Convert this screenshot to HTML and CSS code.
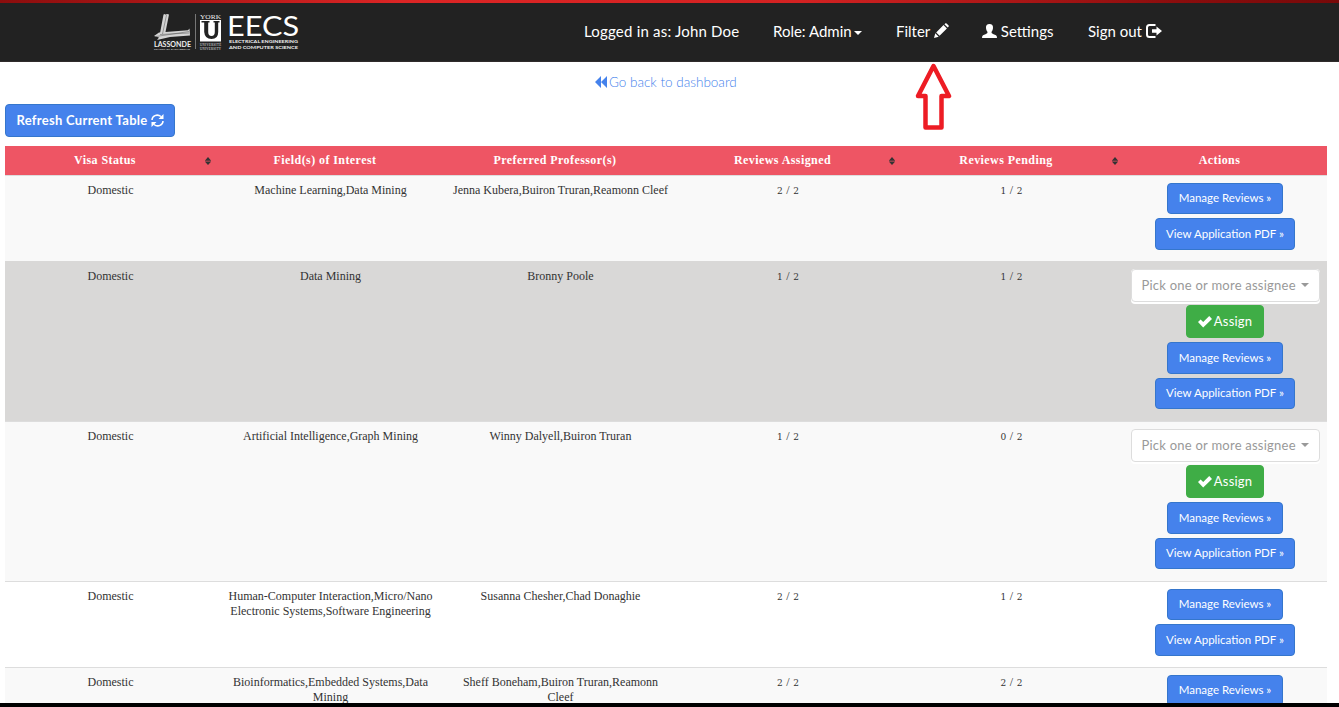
FILE: index.html
```html
<!DOCTYPE html>
<html lang="en">
<head>
<meta charset="utf-8">
<title>Applications</title>
<link rel="stylesheet" href="styles.css">
</head>
<body>
<svg width="0" height="0" class="sprites" aria-hidden="true">
  <symbol id="sort" viewBox="0 0 6 8"><path d="M3 0 6 3.400V3.800H0V3.400ZM0 4.400h6v.4L3 8 0 4.800Z"/></symbol>
  <symbol id="check" viewBox="0 0 14 12"><path d="M0 6.100 2.600 3.500 5.200 6.100 11.200.1 14 2.900 5.200 11.500Z"/></symbol>
</svg>
<header class="navbar">
  <svg class="logo" width="150" height="44" viewBox="0 0 150 44">
    <g fill="#d4d4d4">
      <path d="M9.500 2.500 11 2l.5.800L13 2l2 .5L10.500 25 5.500 24Z"/>
      <path d="M0 24 5 20.500l29-2.300 1.500-1.700.5 7L16 25 3 28 5 25.500Z"/>
    </g>
    <path d="M12.500 3 8.500 22M2 24.500l33-5M6 22.500l29-1.500" fill="none" stroke="#555" stroke-width=".5"/>
    <text class="logo-bold" x="0" y="34.500" font-size="7" textLength="37" lengthAdjust="spacingAndGlyphs">LASSONDE</text>
    <text class="logo-sans" x="0" y="37.800" font-size="2.600" textLength="36">SCHOOL OF ENGINEERING</text>
    <path d="M41.500 2v35" stroke="#777"/>
    <text class="logo-serif" x="46" y="6.500" font-size="6.800" textLength="21" lengthAdjust="spacingAndGlyphs">YORK</text>
    <path fill="#fff" d="M46 8h21v21.500H46Z"/>
    <path fill="#222" d="M47.500 9h8v1.500h-1.300V20q0 4 3.300 4t3.300-4V10.500H59.500V9h6v1.500h-1.300V20q0 7-6.700 7t-7.300-7V10.500H47.500Z"/>
    <text class="logo-serif" x="46" y="33.800" font-size="3" textLength="21">UNIVERSITÉ</text>
    <text class="logo-serif" x="46" y="37.500" font-size="3" textLength="21">UNIVERSITY</text>
    <text class="logo-main" x="73" y="24" font-size="27" textLength="72" lengthAdjust="spacingAndGlyphs">EECS</text>
    <text class="logo-bold" x="75" y="30.500" font-size="4.400" textLength="69" lengthAdjust="spacingAndGlyphs">ELECTRICAL ENGINEERING</text>
    <text class="logo-bold" x="75" y="36.500" font-size="4.400" textLength="69" lengthAdjust="spacingAndGlyphs">AND COMPUTER SCIENCE</text>
  </svg>
  <nav class="nav">
    <span class="n-user">Logged in as: John Doe</span>
    <span class="n-role">Role: Admin<i class="caret"></i></span>
    <span class="n-filter">Filter <svg width="15" height="15" viewBox="0 0 15 15"><path fill="#fff" d="M0 15 1.300 10.300 4.700 13.700ZM2.200 9.400 9.500 2.100 12.900 5.500 5.600 12.800ZM10.400 1.300 11.500.3Q12 0 12.600.5L14.600 2.500Q15 3 14.700 3.600L13.700 4.600Z"/></svg></span>
    <span class="n-settings"><svg width="15" height="14" viewBox="0 0 15 14"><path fill="#fff" d="M7.500 0C10 0 11.200 1.600 11 4 10.900 6 10 7 9.500 8c0 1 .5 1.500 1.500 2l3 1.200q1 .5 1 2.800H0q0-2.300 1-2.800L4 10c1-.5 1.500-1 1.500-2C5 7 4.100 6 4 4 3.800 1.600 5 0 7.500 0Z"/></svg> Settings</span>
    <span class="n-out">Sign out <svg width="16" height="14" viewBox="0 0 16 14"><path fill="none" stroke="#fff" stroke-width="2" d="M9.500 1H3.500Q1 1 1 3.500v7Q1 13 3.500 13h6"/><path fill="#fff" d="M6 5.300h4.500V2.500L16 7l-5.500 4.500V8.700H6Z"/></svg></span>
  </nav>
</header>
<main>
  <a class="back"><svg width="12" height="12" viewBox="0 0 12 12"><path fill="#4582ec" d="M0 6 6 0V12ZM6 6l6-6V12Z"/></svg><span>Go back to dashboard</span></a>
  <button class="btn refresh"><span>Refresh Current Table</span><svg width="13" height="13" viewBox="0 0 13 13"><path fill="none" stroke="#fff" stroke-width="1.500" d="M1 6C1 2 6-.5 10 2.500M12 7c0 4-5 6.500-9 3.500"/><path fill="#fff" d="M12.500 0v5h-5ZM.5 13V8h5Z"/></svg></button>
  <div class="table">
    <div class="row head">
      <div><b>Visa Status</b><svg class="sort"><use href="#sort"/></svg></div>
      <div><b>Field(s) of Interest</b></div>
      <div><b>Preferred Professor(s)</b></div>
      <div><b>Reviews Assigned</b><svg class="sort"><use href="#sort"/></svg></div>
      <div><b>Reviews Pending</b><svg class="sort"><use href="#sort"/></svg></div>
      <div><b>Actions</b></div>
    </div>
    <div class="row odd">
      <div>Domestic</div><div>Machine Learning,Data Mining</div><div>Jenna Kubera,Buiron Truran,Reamonn Cleef</div>
      <div class="num"><i>2</i> / <i>2</i></div><div class="num"><i>1</i> / <i>2</i></div>
      <div class="actions"><button class="btn manage">Manage Reviews »</button><button class="btn view">View Application PDF »</button></div>
    </div>
    <div class="row tall hover">
      <div>Domestic</div><div>Data Mining</div><div>Bronny Poole</div>
      <div class="num"><i>1</i> / <i>2</i></div><div class="num"><i>1</i> / <i>2</i></div>
      <div class="actions"><div class="picker"><div class="select"><span>Pick one or more assignee</span><i class="caret"></i></div></div><button class="btn assign"><svg width="14" height="12"><use href="#check"/></svg><span>Assign</span></button><button class="btn manage">Manage Reviews »</button><button class="btn view">View Application PDF »</button></div>
    </div>
    <div class="row tall odd">
      <div>Domestic</div><div>Artificial Intelligence,Graph Mining</div><div>Winny Dalyell,Buiron Truran</div>
      <div class="num"><i>1</i> / <i>2</i></div><div class="num"><i>0</i> / <i>2</i></div>
      <div class="actions"><div class="picker"><div class="select"><span>Pick one or more assignee</span><i class="caret"></i></div></div><button class="btn assign"><svg width="14" height="12"><use href="#check"/></svg><span>Assign</span></button><button class="btn manage">Manage Reviews »</button><button class="btn view">View Application PDF »</button></div>
    </div>
    <div class="row">
      <div>Domestic</div><div>Human-Computer Interaction,Micro/Nano<br>Electronic Systems,Software Engineering</div><div>Susanna Chesher,Chad Donaghie</div>
      <div class="num"><i>2</i> / <i>2</i></div><div class="num"><i>1</i> / <i>2</i></div>
      <div class="actions"><button class="btn manage">Manage Reviews »</button><button class="btn view">View Application PDF »</button></div>
    </div>
    <div class="row odd last">
      <div>Domestic</div><div>Bioinformatics,Embedded Systems,Data<br>Mining</div><div>Sheff Boneham,Buiron Truran,Reamonn<br>Cleef</div>
      <div class="num"><i>2</i> / <i>2</i></div><div class="num"><i>2</i> / <i>2</i></div>
      <div class="actions"><button class="btn manage">Manage Reviews »</button></div>
    </div>
  </div>
</main>
<svg class="pointer" width="38" height="68" viewBox="0 0 38 68"><path fill="#fff" stroke="#ed1c24" stroke-width="4.500" stroke-linejoin="round" d="M18.500 3 34 33H26.500V64.500H10.500V33H3Z"/></svg>
</body>
</html>
```
FILE: styles.css
```css
* { box-sizing: border-box; }
body { margin: 0; height: 707px; overflow: hidden; background: #fff; border-bottom: 4px solid #000; color: #333; font-family: Lato, "Open Sans", sans-serif; }
.sprites { display: block; height: 0; }
.navbar { height: 62px; background: linear-gradient(90deg, #8b0d0d, #dc2525 30%, #d32222 60%, #8b0d0d 88%, #780909) top / 100% 3px no-repeat, #222; border-bottom: 1px solid #302b2b; display: flex; padding-left: 154px; }
.logo { margin-top: 12px; flex: none; fill: #eee; overflow: visible; }
.logo-bold { font-family: Lato, sans-serif; font-weight: bold; }
.logo-sans, .logo-main { font-family: Lato, sans-serif; }
.logo-serif { font-family: "Liberation Serif", serif; }
.logo-main { fill: #fff; }
.nav { margin-left: 280px; display: grid; grid-template-columns: 189px 123px 86px 106px 90px; padding-top: 21px; color: #fff; font-size: 15px; line-height: 21px; white-space: nowrap; }
.nav svg { vertical-align: -1px; }
.n-user { letter-spacing: .2px; }
.caret { display: inline-block; border: 4px solid transparent; border-top-color: currentColor; border-bottom: 0; vertical-align: middle; }
.nav .caret { margin-left: 2px; }
.back { display: flex; align-items: center; gap: 2px; height: 20px; margin: 10px 0 0 595px; color: #4582ec; font-size: 13.5px; font-weight: 300; white-space: nowrap; }
.btn { display: flex; align-items: center; justify-content: center; gap: 3px; padding: 0; border: 1px solid #3576cc; border-radius: 4px; background: #4582ec; color: #fff; font-family: Lato, sans-serif; font-size: 11.5px; line-height: 15px; white-space: nowrap; }
.refresh { margin: 12px 0 9px 5px; width: 170px; height: 33px; font-size: 13px; font-weight: bold; letter-spacing: .3px; }
.table { width: 1322px; margin-left: 5px; font: 12px/15px "Liberation Serif", serif; }
.row { display: grid; grid-template-columns: 211px 229px 231px 224px 223px 204px; height: 86px; border-top: 1px solid #ddd; text-align: center; white-space: nowrap; }
.row > div { padding-top: 7px; }
.odd { background: #f9f9f9; }
.hover { background: #d9d8d7; border-color: #d9d8d7; }
.tall { height: 160px; }
.last { height: 36px; overflow: hidden; }
.head { height: 29px; background: #ee5564; color: #fff; border: 0; }
.head > div { display: grid; grid-template-columns: 1fr 8px; padding: 7px 3px 0 8px; }
.head b { padding-right: 8px; letter-spacing: .42px; }
.sort { width: 6px; height: 8px; margin-top: 4px; fill: #333; }
.num { word-spacing: .5px; }
.num i { font: 9px "DejaVu Serif", serif; }
.row > .actions { display: flex; flex-direction: column; align-items: center; gap: 4px; padding-top: 7px; }
.manage, .view { height: 31.4px; padding-bottom: 2px; }
.manage { width: 116px; }
.view { width: 140px; }
.picker { width: 189px; height: 35px; margin-bottom: -3px; background: #fff; border-radius: 4px; }
.select { height: 33px; display: flex; align-items: center; gap: 5px; padding: 0 0 2px 10px; border: 1px solid #ddd; border-radius: 4px; color: #999; background: #fff; font: 13px Lato, sans-serif; letter-spacing: .24px; }
.assign { width: 78px; height: 33px; margin-bottom: .4px; border-color: #3fad46; background: #3fad46; font-size: 13px; letter-spacing: .2px; gap: 2px; }
.assign svg { fill: #fff; }
.pointer { position: absolute; left: 915px; top: 63px; }
```
